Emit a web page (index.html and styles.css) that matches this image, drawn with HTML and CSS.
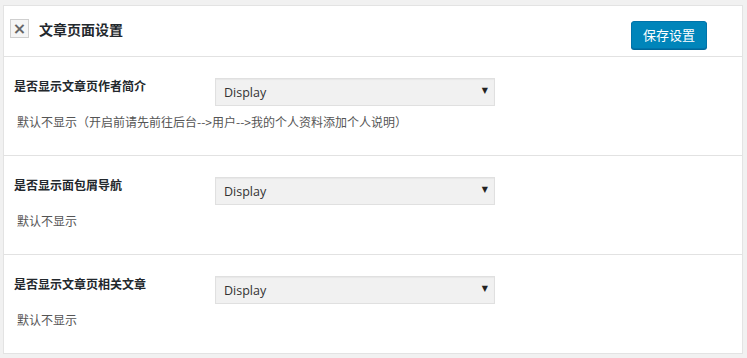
FILE: index.html
```html
<!DOCTYPE html>
<html lang="zh">
<head>
<meta charset="utf-8">
<title>文章页面设置</title>
<link rel="stylesheet" href="styles.css">
</head>
<body>
<div class="panel">
  <div class="panel-head">
    <span class="close">×</span>
    <h2 class="title">文章页面设置</h2>
    <button class="save">保存设置</button>
  </div>
  <div class="section">
    <div class="row">
      <label class="label">是否显示文章页作者简介</label>
      <div class="select-wrap">
        <select class="select"><option>Display</option></select>
        <span class="arrow">▼</span>
      </div>
    </div>
    <p class="desc">默认不显示（开启前请先前往后台--&gt;用户--&gt;我的个人资料添加个人说明）</p>
  </div>
  <div class="section">
    <div class="row">
      <label class="label">是否显示面包屑导航</label>
      <div class="select-wrap">
        <select class="select"><option>Display</option></select>
        <span class="arrow">▼</span>
      </div>
    </div>
    <p class="desc">默认不显示</p>
  </div>
  <div class="section">
    <div class="row">
      <label class="label">是否显示文章页相关文章</label>
      <div class="select-wrap">
        <select class="select"><option>Display</option></select>
        <span class="arrow">▼</span>
      </div>
    </div>
    <p class="desc">默认不显示</p>
  </div>
</div>
</body>
</html>
```
FILE: styles.css
```css
* { box-sizing: border-box; }
html, body { margin: 0; }
body {
  background: #f1f1f1;
  padding: 5px 5px 5px 3px;
  font-family: "Noto Sans CJK SC", "Open Sans", sans-serif;
  font-size: 13px;
  color: #23282d;
}
.panel {
  background: #fff;
  border: 1px solid #e3e3e3;
  width: 740px;
  height: 349px;
}
.panel-head {
  height: 51px;
  border-bottom: 1px solid #e2e2e2;
  display: flex;
  align-items: center;
  padding: 0 35px 0 6px;
}
.close {
  width: 19px;
  height: 19px;
  border: 1px solid #cfcfcf;
  background: #f5f5f5;
  color: #666;
  font-family: "DejaVu Sans", sans-serif;
  font-size: 16px;
  font-weight: 700;
  line-height: 17px;
  text-align: center;
  margin-top: -6px;
}
.title {
  margin: -5px 0 0 10px;
  font-size: 14px;
  font-weight: 700;
  color: #23282d;
  flex: 1;
}
.save {
  width: 76px;
  height: 28px;
  background: #0085ba;
  border: 1px solid #0073aa;
  border-radius: 3px;
  box-shadow: 0 1px 0 #006799;
  color: #fff;
  font-family: "Noto Sans CJK SC", sans-serif;
  font-size: 13px;
  padding: 0;
  margin-top: 7px;
}
.section {
  height: 99px;
  border-bottom: 1px solid #e2e2e2;
  padding: 21px 0 0 10px;
}
.section:last-child { border-bottom: none; height: 97px; }
.row { display: flex; align-items: flex-start; }
.label {
  width: 201px;
  font-weight: 700;
  font-size: 12px;
  line-height: 20px;
  margin-top: -2px;
  color: #23282d;
}
.select-wrap { position: relative; width: 280px; height: 28px; }
.select {
  appearance: none;
  -webkit-appearance: none;
  width: 280px;
  height: 28px;
  background: #f1f1f1;
  border: 1px solid #e0e0e0;
  border-radius: 0;
  box-shadow: inset 0 1px 1px rgba(0,0,0,.04);
  padding: 0 8px;
  font-family: "Open Sans", "Noto Sans", sans-serif;
  font-size: 12.5px;
  color: #333;
}
.arrow {
  position: absolute;
  right: 7px;
  top: 8px;
  font-family: "DejaVu Sans", sans-serif;
  font-size: 8px;
  color: #222;
  pointer-events: none;
}
.desc {
  margin: 6px 0 0 3px;
  font-size: 12px;
  line-height: 20px;
  color: #555;
}
```
